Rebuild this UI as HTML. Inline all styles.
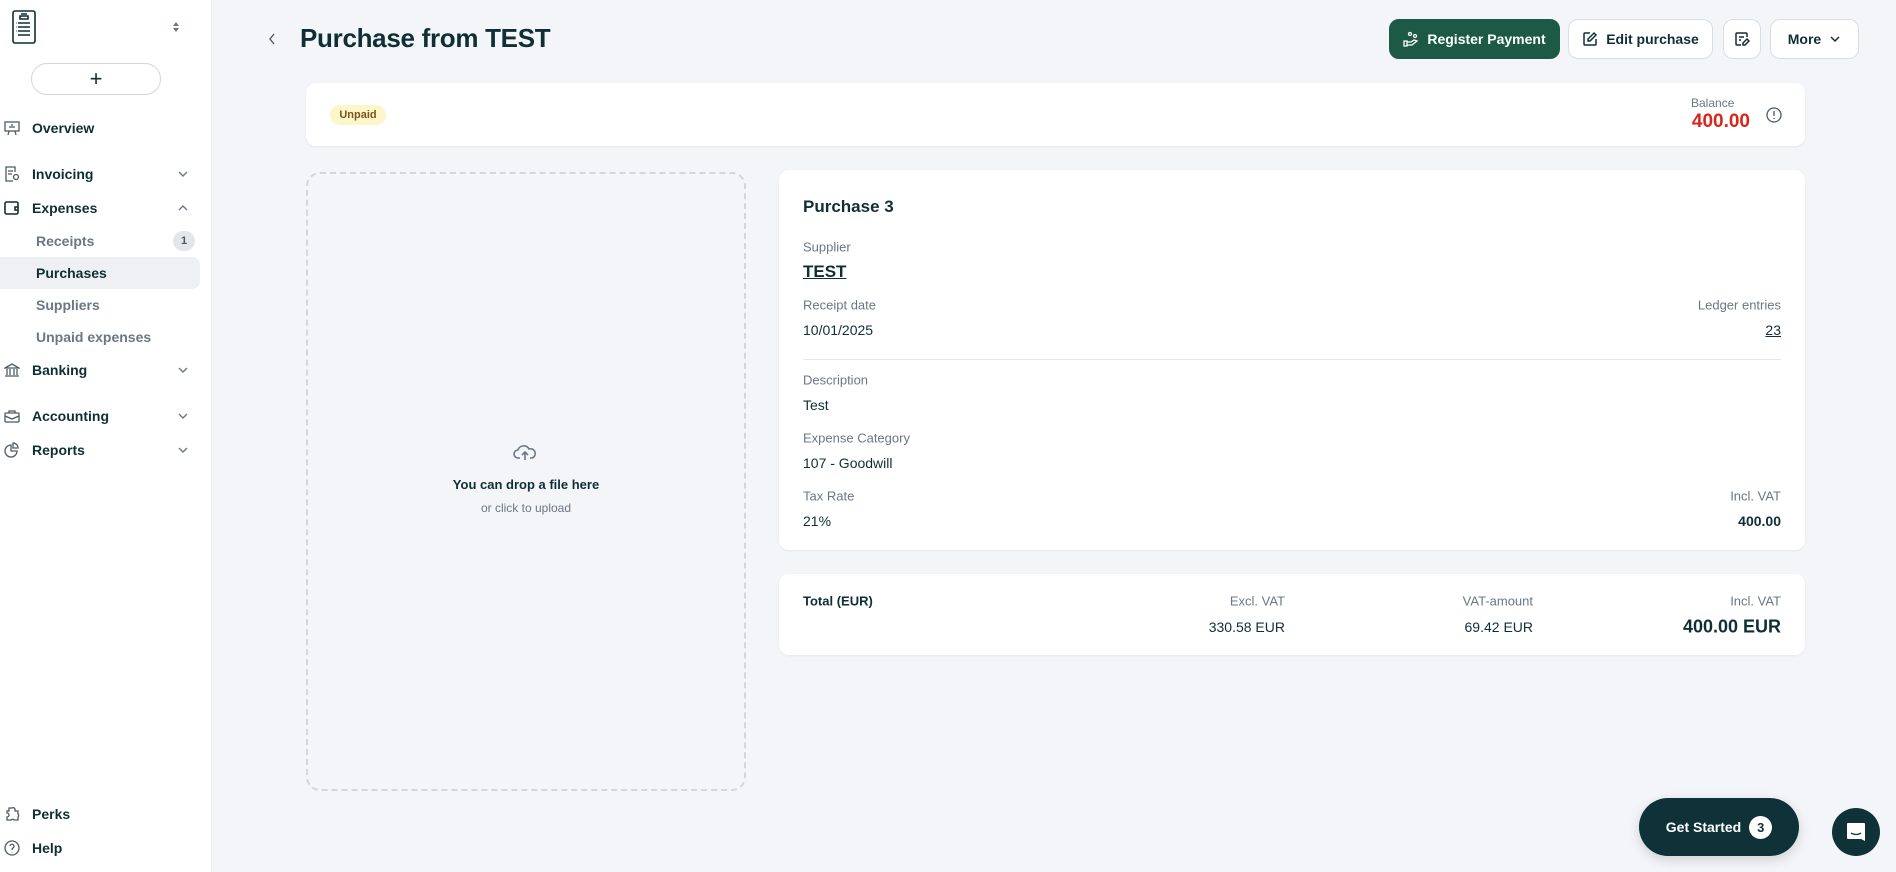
<!DOCTYPE html>
<html><head><meta charset="utf-8"><style>
*{box-sizing:border-box;margin:0;padding:0}
body{width:1896px;height:872px;overflow:hidden;background:#f4f5f9;font-family:"Liberation Sans",sans-serif;color:#0f2f35;position:relative}
.a{position:absolute}
.sb{left:0;top:0;width:212px;height:872px;background:#fff;border-right:1px solid #eceef2}
.nav{position:absolute;left:32px;font-size:14px;font-weight:bold;color:#0f2f35;transform:translateY(-50%)}
.sub{position:absolute;left:36px;font-size:14px;font-weight:bold;color:#6b7785;transform:translateY(-50%)}
.ic{position:absolute;left:4px;transform:translateY(-50%)}
.chev{position:absolute;left:177px;transform:translateY(-50%)}
.card{background:#fff;border-radius:10px;box-shadow:0 1px 2px rgba(0,0,0,.06)}
.btn{position:absolute;top:19px;height:40px;border-radius:10px;background:#fff;border:1px solid #d9dde3;display:flex;align-items:center;justify-content:center;font-size:14px;font-weight:bold;gap:8px;color:#0f2f35}
.lbl{position:absolute;font-size:13px;color:#6b7785;transform:translateY(-50%)}
.val{position:absolute;font-size:14px;color:#0f2f35;transform:translateY(-50%)}
.r{text-align:right}
</style></head><body>
<div class="a sb">
 <svg class="a" style="left:12px;top:10px" width="24" height="34" viewBox="0 0 24 34" fill="none" stroke="#0f2f35" stroke-width="1.6"><rect x="1" y="1" width="22" height="32" rx="2"/><path d="M8 6h8v3H8zM9 4h6M6 13h12M6 17h12M6 21h12M6 25h12M4 13h0.5M4 17h.5M4 21h.5"/></svg>
 <svg class="a" style="left:172px;top:21px" width="8" height="12" viewBox="0 0 8 12" fill="#6b7785"><path d="M4 1l3 4H1zM4 11l3-4H1z"/></svg>
 <div class="a" style="left:31px;top:63px;width:130px;height:32px;border:1px solid #d2d6dc;border-radius:16px;display:flex;align-items:center;justify-content:center;font-size:22px;color:#0f2f35">+</div>
 <svg class="ic" style="top:128px" width="16" height="16" viewBox="0 0 16 16" fill="none" stroke="#4b5b66" stroke-width="1.3"><rect x="1" y="2" width="14" height="9"/><path d="M5 11l-1 4M11 11l1 4M6 8V6M8 8V4M10 8V6"/></svg>
 <div class="nav" style="top:128px">Overview</div>
 <svg class="ic" style="top:174px" width="16" height="16" viewBox="0 0 16 16" fill="none" stroke="#4b5b66" stroke-width="1.3"><path d="M11 6V1H2v14h7M4 5h5M4 8h4"/><circle cx="12" cy="11" r="2.5"/></svg>
 <div class="nav" style="top:174px">Invoicing</div>
 <svg class="chev" style="top:174px" width="12" height="8" viewBox="0 0 12 8" fill="none" stroke="#6b7785" stroke-width="1.4"><path d="M2 2l4 4 4-4"/></svg>
 <svg class="ic" style="top:208px" width="16" height="16" viewBox="0 0 16 16" fill="none" stroke="#0f2f35" stroke-width="1.6"><rect x="1" y="2" width="13" height="12" rx="1.5"/><path d="M14 7h-3v3h3"/></svg>
 <div class="nav" style="top:208px">Expenses</div>
 <svg class="chev" style="top:208px" width="12" height="8" viewBox="0 0 12 8" fill="none" stroke="#6b7785" stroke-width="1.4"><path d="M2 6l4-4 4 4"/></svg>
 <div class="sub" style="top:241px">Receipts</div>
 <div class="a" style="left:173px;top:231px;width:22px;height:20px;border-radius:10px;background:#e3e6ea;font-size:11px;font-weight:bold;color:#4b5b66;text-align:center;line-height:20px">1</div>
 <div class="a" style="left:0;top:257px;width:200px;height:32px;background:#eef0f3;border-radius:0 8px 8px 0"></div>
 <div class="sub" style="top:273px;color:#0f2f35">Purchases</div>
 <div class="sub" style="top:305px">Suppliers</div>
 <div class="sub" style="top:337px">Unpaid expenses</div>
 <svg class="ic" style="top:370px" width="16" height="16" viewBox="0 0 16 16" fill="none" stroke="#4b5b66" stroke-width="1.3"><path d="M1 6l7-4 7 4zM3 7v6M6 7v6M10 7v6M13 7v6M1 14h14"/></svg>
 <div class="nav" style="top:370px">Banking</div>
 <svg class="chev" style="top:370px" width="12" height="8" viewBox="0 0 12 8" fill="none" stroke="#6b7785" stroke-width="1.4"><path d="M2 2l4 4 4-4"/></svg>
 <svg class="ic" style="top:416px" width="16" height="16" viewBox="0 0 16 16" fill="none" stroke="#4b5b66" stroke-width="1.3"><rect x="1" y="5" width="14" height="9" rx="1"/><path d="M5 5V3h6v2M1 8l7 3 7-3"/></svg>
 <div class="nav" style="top:416px">Accounting</div>
 <svg class="chev" style="top:416px" width="12" height="8" viewBox="0 0 12 8" fill="none" stroke="#6b7785" stroke-width="1.4"><path d="M2 2l4 4 4-4"/></svg>
 <svg class="ic" style="top:450px" width="16" height="16" viewBox="0 0 16 16" fill="none" stroke="#4b5b66" stroke-width="1.3"><path d="M7 3a6 6 0 106 6H7z"/><path d="M9 1v5h5a5 5 0 00-5-5z"/></svg>
 <div class="nav" style="top:450px">Reports</div>
 <svg class="chev" style="top:450px" width="12" height="8" viewBox="0 0 12 8" fill="none" stroke="#6b7785" stroke-width="1.4"><path d="M2 2l4 4 4-4"/></svg>
 <svg class="ic" style="top:814px" width="16" height="16" viewBox="0 0 16 16" fill="none" stroke="#4b5b66" stroke-width="1.3"><path d="M5 2h3a2 2 0 013 1v2h3v3a2 2 0 010 3v3h-4a2 2 0 00-3 0H3v-3a2 2 0 000-4V5h2z"/></svg>
 <div class="nav" style="top:814px">Perks</div>
 <svg class="ic" style="top:848px" width="16" height="16" viewBox="0 0 16 16" fill="none" stroke="#4b5b66" stroke-width="1.3"><circle cx="8" cy="8" r="7"/><path d="M6 6a2 2 0 113 2c-1 .5-1 1-1 2M8 12v.5"/></svg>
 <div class="nav" style="top:848px">Help</div>
</div>

<svg class="a" style="left:268px;top:33px" width="8" height="12" viewBox="0 0 8 12" fill="none" stroke="#4b5b66" stroke-width="1.4"><path d="M6 1L2 6l4 5"/></svg>
<div class="a" style="left:300px;top:23px;font-size:26px;font-weight:bold;letter-spacing:-0.3px">Purchase from TEST</div>

<div class="btn" style="left:1389px;width:171px;background:#1d5a45;border-color:#1d5a45;color:#fff">
 <svg width="16" height="16" viewBox="0 0 16 16" fill="none" stroke="#fff" stroke-width="1.3"><circle cx="7" cy="3" r="1.5"/><circle cx="12" cy="5" r="1.5"/><path d="M1 10h3v5H1zM4 11h4l3-2 3 1-5 4H4"/></svg>Register Payment</div>
<div class="btn" style="left:1568px;width:145px">
 <svg width="16" height="16" viewBox="0 0 16 16" fill="none" stroke="#0f2f35" stroke-width="1.5"><path d="M8 2H3a1 1 0 00-1 1v10a1 1 0 001 1h10a1 1 0 001-1V8"/><path d="M12 2l2 2-6 6H6V8z"/></svg>Edit purchase</div>
<div class="btn" style="left:1723px;width:38px">
 <svg width="16" height="16" viewBox="0 0 16 16" fill="none" stroke="#0f2f35" stroke-width="1.5"><path d="M7 14H3a1 1 0 01-1-1V3a1 1 0 011-1h9a1 1 0 011 1v3M5 6h5M5 9h2"/><path d="M13 8l2 2-4 4H9v-2z"/></svg></div>
<div class="btn" style="left:1770px;width:89px">More <svg width="12" height="8" viewBox="0 0 12 8" fill="none" stroke="#0f2f35" stroke-width="1.5"><path d="M2 2l4 4 4-4"/></svg></div>

<div class="a card" style="left:306px;top:83px;width:1499px;height:63px"></div>
<div class="a" style="left:330px;top:105px;width:56px;height:20px;border-radius:10px;background:#fdf6c8;color:#7a5520;font-size:11px;font-weight:bold;text-align:center;line-height:20px">Unpaid</div>
<div class="lbl" style="left:1650px;width:84px;top:103px;font-size:12px" >Balance</div>
<div class="a" style="left:1650px;width:100px;top:111px;font-size:19px;font-weight:bold;color:#d8261c;text-align:right">400.00</div>
<svg class="a" style="left:1766px;top:107px" width="16" height="16" viewBox="0 0 16 16" fill="none" stroke="#4b5b66" stroke-width="1.3"><circle cx="8" cy="8" r="7"/><path d="M8 4v5M8 11v1"/></svg>
<style>.lbl[style*="1650px;width:84px"]{text-align:left;left:1691px !important}</style>

<div class="a" style="left:306px;top:172px;width:440px;height:619px;border:2px dashed #d3d6dc;border-radius:14px"></div>
<svg class="a" style="left:513px;top:442px" width="24" height="20" viewBox="0 0 24 20" fill="none" stroke="#6b7785" stroke-width="1.6"><path d="M7 16H5a4 4 0 010-8 6 6 0 0111-1 4.5 4.5 0 013 9h-2M12 18V10M9 13l3-3 3 3"/></svg>
<div class="a" style="left:306px;width:440px;top:477px;text-align:center;font-size:13px;font-weight:bold">You can drop a file here</div>
<div class="a" style="left:306px;width:440px;top:501px;text-align:center;font-size:12px;color:#6b7785">or click to upload</div>

<div class="a card" style="left:779px;top:170px;width:1026px;height:380px"></div>
<div class="val" style="left:803px;top:207px;font-size:17px;font-weight:bold">Purchase 3</div>
<div class="lbl" style="left:803px;top:247px">Supplier</div>
<div class="val" style="left:803px;top:272px;font-size:17px;font-weight:bold;text-decoration:underline">TEST</div>
<div class="lbl" style="left:803px;top:305px">Receipt date</div>
<div class="lbl r" style="right:115px;top:305px">Ledger entries</div>
<div class="val" style="left:803px;top:330px">10/01/2025</div>
<div class="val r" style="right:115px;top:330px;text-decoration:underline">23</div>
<div class="a" style="left:803px;top:359px;width:978px;height:1px;background:#e4e6ea"></div>
<div class="lbl" style="left:803px;top:380px">Description</div>
<div class="val" style="left:803px;top:405px">Test</div>
<div class="lbl" style="left:803px;top:438px">Expense Category</div>
<div class="val" style="left:803px;top:463px">107 - Goodwill</div>
<div class="lbl" style="left:803px;top:496px">Tax Rate</div>
<div class="lbl r" style="right:115px;top:496px">Incl. VAT</div>
<div class="val" style="left:803px;top:521px">21%</div>
<div class="val r" style="right:115px;top:521px;font-weight:bold">400.00</div>

<div class="a card" style="left:779px;top:574px;width:1026px;height:81px"></div>
<div class="val" style="left:803px;top:601px;font-size:13px;font-weight:bold">Total (EUR)</div>
<div class="lbl r" style="right:611px;top:601px">Excl. VAT</div>
<div class="val r" style="right:611px;top:627px">330.58 EUR</div>
<div class="lbl r" style="right:363px;top:601px">VAT-amount</div>
<div class="val r" style="right:363px;top:627px">69.42 EUR</div>
<div class="lbl r" style="right:115px;top:601px">Incl. VAT</div>
<div class="val r" style="right:115px;top:627px;font-size:18px;font-weight:bold">400.00 EUR</div>

<div class="a" style="left:1639px;top:798px;width:160px;height:58px;border-radius:29px;background:#0e3238;color:#fff;display:flex;align-items:center;justify-content:center;gap:8px;font-size:14px;font-weight:bold;box-shadow:0 4px 12px rgba(0,0,0,.15)">Get Started <span style="width:23px;height:23px;border-radius:50%;background:#fff;color:#0e3238;text-align:center;line-height:23px;font-size:13px">3</span></div>
<div class="a" style="left:1832px;top:808px;width:48px;height:48px;border-radius:50%;background:#0e3238;display:flex;align-items:center;justify-content:center">
<svg width="22" height="22" viewBox="0 0 22 22"><path d="M3 2h16a1 1 0 011 1v17l-4-2H3a1 1 0 01-1-1V3a1 1 0 011-1z" fill="#fff"/><path d="M6 12c3 2 7 2 10 0" stroke="#0e3238" stroke-width="1.3" fill="none"/></svg></div>
</body></html>
